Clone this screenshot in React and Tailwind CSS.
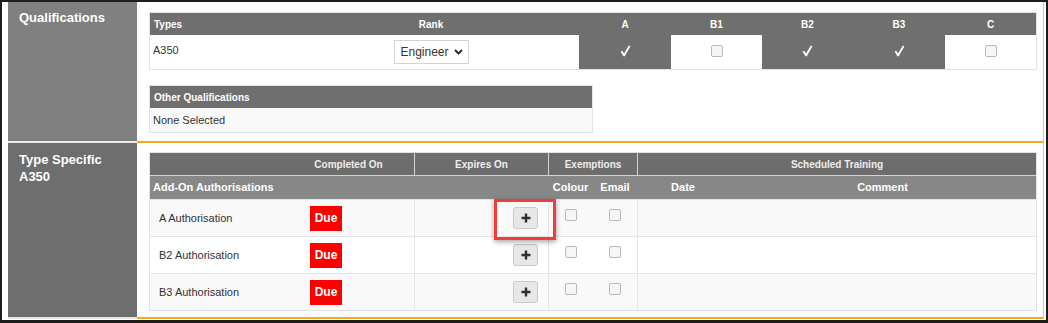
import React from 'react';

const Checkbox = () => (
  <span className="block w-[12px] h-[12px] border border-[#b9b9b9] rounded-[2px] bg-[#f6f6f6]" />
);

const Tick = () => (
  <svg width="11" height="12" viewBox="0 0 11 12">
    <path d="M0.6 6.6L2.3 5.7L4 8.4L8.9 0.4L10.4 1.3L4.8 11.3H3.4Z" fill="#ffffff" />
  </svg>
);

const PlusButton = () => (
  <span className="flex items-center justify-center w-[25px] h-[22px] bg-[#e7e7e7] border border-[#c9c9c9] rounded-[3px]">
    <svg width="10" height="10" viewBox="0 0 10 10">
      <path d="M5 0.5v9M0.5 5h9" stroke="#2f2f2f" strokeWidth="2.4" />
    </svg>
  </span>
);

const qualCols = [
  { label: 'A', checked: true },
  { label: 'B1', checked: false },
  { label: 'B2', checked: true },
  { label: 'B3', checked: true },
  { label: 'C', checked: false },
];

const authorisations = ['A Authorisation', 'B2 Authorisation', 'B3 Authorisation'];

const grid1 = 'grid grid-cols-[133px_296px_92px_91px_91px_92px_91px]';
const grid2 = 'grid grid-cols-[133px_131px_134px_45px_44px_92px_307px]';

function QualificationsTable() {
  return (
    <div className="w-[888px] border border-[#e3e3e3]">
      <div className={`${grid1} h-[22px] bg-[#6f6f6f] text-white text-[10px] font-bold`}>
        <div className="flex items-center pl-[4px]">Types</div>
        <div className="flex items-center justify-center">Rank</div>
        {qualCols.map((c) => (
          <div key={c.label} className="flex items-center justify-center">{c.label}</div>
        ))}
      </div>
      <div className={`${grid1} h-[34px] bg-white`}>
        <div className="flex items-center pl-[3px] pb-[3px] text-[11px] text-[#333]">A350</div>
        <div className="flex items-center justify-center">
          <div className="flex items-center justify-between w-[75px] h-[24px] border border-[#d3d3d3] bg-white pl-[6px] pr-[5px] text-[12px] text-[#333]">
            <span>Engineer</span>
            <svg width="9" height="6" viewBox="0 0 9 6">
              <path d="M1 1l3.5 3.5L8 1" fill="none" stroke="#222" strokeWidth="1.8" />
            </svg>
          </div>
        </div>
        {qualCols.map((c) => (
          <div
            key={c.label}
            className={`flex items-center justify-center pb-[3px] ${c.checked ? 'bg-[#6f6f6f]' : 'bg-white'}`}
          >
            {c.checked ? <Tick /> : <Checkbox />}
          </div>
        ))}
      </div>
    </div>
  );
}

function OtherQualifications() {
  return (
    <div className="w-[444px] mt-[15px] border border-[#e3e3e3]">
      <div className="h-[22px] bg-[#6f6f6f] flex items-center pl-[4px] text-white text-[10px] font-bold">
        Other Qualifications
      </div>
      <div className="h-[24px] bg-[#f9f9f9] flex items-center pl-[3px] text-[11px] text-[#333]">
        None Selected
      </div>
    </div>
  );
}

function AuthorisationsTable() {
  return (
    <div className="relative w-[888px] border border-[#e3e3e3]">
      <div className={`${grid2} h-[22px] bg-[#6d6d6d] text-[#eeeeee] text-[10px] font-bold`}>
        <div />
        <div className="flex items-center justify-center">Completed On</div>
        <div className="flex items-center justify-center border-l border-[#d4d4d4]">Expires On</div>
        <div className="col-span-2 flex items-center justify-center border-l border-[#d4d4d4]">Exemptions</div>
        <div className="col-span-2 flex items-center justify-center border-l border-[#d4d4d4]">Scheduled Training</div>
      </div>
      <div className={`${grid2} h-[24px] bg-[#878787] border-t border-[#d4d4d4] text-white text-[11px] font-bold`}>
        <div className="col-span-3 flex items-center pl-[3px]">Add-On Authorisations</div>
        <div className="flex items-center justify-center">Colour</div>
        <div className="flex items-center justify-center">Email</div>
        <div className="flex items-center justify-center">Date</div>
        <div className="flex items-center justify-center">Comment</div>
      </div>
      {authorisations.map((name, i) => (
        <div
          key={name}
          className={`${grid2} h-[37px] border-t border-[#e4e4e4] ${i % 2 === 0 ? 'bg-[#f9f9f9]' : 'bg-white'}`}
        >
          <div className="flex items-center pl-[9px] text-[11px] text-[#333]">{name}</div>
          <div className="flex items-center pl-[27px]">
            <span className="flex items-center justify-center w-[32px] h-[25px] bg-[#ff0000] text-white text-[12px] font-bold">
              Due
            </span>
          </div>
          <div className="flex items-center justify-end pr-[10px] border-l border-[#e4e4e4]">
            <PlusButton />
          </div>
          <div className="flex justify-center pt-[9px] border-l border-[#e4e4e4]">
            <Checkbox />
          </div>
          <div className="flex justify-center pt-[9px]">
            <Checkbox />
          </div>
          <div className="col-span-2 border-l border-[#e4e4e4]" />
        </div>
      ))}
      <div className="absolute left-[344px] top-[46px] w-[62px] h-[41px] border-[3px] border-[#f03c3c] shadow-[0_2px_5px_rgba(0,0,0,0.35)]" />
    </div>
  );
}

export default function App() {
  return (
    <div className="w-[1048px] h-[323px] box-border overflow-hidden bg-white border-t-2 border-l-2 border-r-2 border-b-[3px] border-[#1d1d1d] font-['Liberation_Sans',Arial,sans-serif]">
      <div className="ml-[6px] mr-[2px] border-r border-[#c9c9c9]">
        <div className="flex">
          <div className="w-[129px] shrink-0 bg-[#808080] border-b-2 border-[#ebebeb] pl-[11px] pt-[7px] text-white text-[13px] font-bold leading-[17px]">
            Qualifications
          </div>
          <div className="flex-1 border-b-2 border-[#f7a722] pl-[12px] pr-[6px] pt-[10px] pb-[8px]">
            <QualificationsTable />
            <OtherQualifications />
          </div>
        </div>
        <div className="flex">
          <div className="w-[129px] shrink-0 bg-[#6e6e6e] border-b-2 border-[#e6e6e6] pl-[11px] pt-[8px] text-white text-[13px] font-bold leading-[17px]">
            Type Specific
            <br />
            A350
          </div>
          <div className="flex-1 border-b-2 border-[#f7a722] pl-[12px] pr-[6px] pt-[9px] pb-[6px]">
            <AuthorisationsTable />
          </div>
        </div>
      </div>
    </div>
  );
}
